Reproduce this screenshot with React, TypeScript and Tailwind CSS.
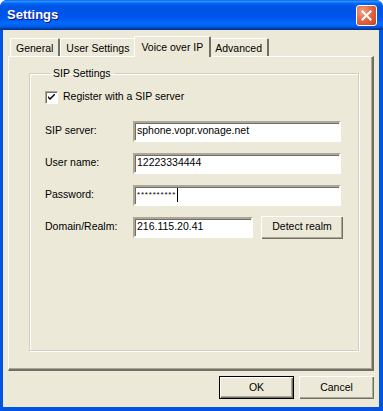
import { useState } from "react";

const font = "font-['Liberation_Sans',Arial,sans-serif]";

function Tab({ label, selected }: { label: string; selected?: boolean }) {
  if (selected) {
    return (
      <div className="relative z-10 -mx-[2px] mb-[-1px] flex h-[21px] items-start border-l border-t border-r-2 border-l-white border-t-white border-r-[#716F64] bg-[#ECE9D8] px-[6px] pt-[3px] rounded-t-[2px]">
        {label}
      </div>
    );
  }
  return (
    <div className="flex h-[18px] items-start border-l border-t border-r-2 border-l-white border-t-white border-r-[#716F64] bg-[#ECE9D8] px-[5px] pt-[2px] rounded-t-[2px]">
      {label}
    </div>
  );
}

function Field({ label, value, children }: { label: string; value?: string; children?: React.ReactNode }) {
  return (
    <div className="flex h-[21px] items-center">
      <div className="w-[88px] shrink-0">{label}</div>
      <div className="flex h-[21px] w-[208px] items-center border-2 border-t-[#ACA899] border-l-[#ACA899] border-b-white border-r-white bg-white shadow-[inset_1px_1px_0_#716F64] pl-[2px]">
        {value}
        {children}
      </div>
    </div>
  );
}

function Btn({ label, def, w = "w-[75px]" }: { label: string; def?: boolean; w?: string }) {
  return (
    <button
      className={`flex h-[23px] ${w} items-center justify-center bg-[#ECE9D8] ${
        def
          ? "border border-black shadow-[inset_1px_1px_0_#fff,inset_-1px_-1px_0_#716F64,inset_-2px_-2px_0_#ACA899]"
          : "shadow-[inset_1px_1px_0_#fff,inset_-1px_-1px_0_#716F64,inset_-2px_-2px_0_#ACA899]"
      }`}
    >
      {label}
    </button>
  );
}

export default function App() {
  const [checked, setChecked] = useState(true);

  return (
    <div className={`${font} flex h-[411px] w-[383px] flex-col rounded-t-[7px] bg-[#0054E3] text-[10.5px] text-black`}>
      {/* title bar */}
      <div className="flex h-[30px] shrink-0 items-center justify-between rounded-t-[7px] bg-[linear-gradient(to_bottom,#0058ee_0%,#3593ff_4%,#288eff_6%,#127dff_8%,#036ffc_10%,#0262ee_14%,#0057e5_20%,#0054e3_24%,#0055eb_56%,#005bf5_66%,#026afe_76%,#0062ef_86%,#0052d6_92%,#0040ab_94%,#003092_100%)] pl-[7px] pr-[6px]">
        <span className="text-[13px] font-bold text-white [text-shadow:1px_1px_#0F1089]">Settings</span>
        <button className="flex h-[21px] w-[21px] items-center justify-center rounded-[3px] border border-white bg-[radial-gradient(circle_at_30%_30%,#F2A287_0%,#E36A46_45%,#C8401E_100%)]">
          <svg width="11" height="11" viewBox="0 0 11 11">
            <path d="M1.5 1.5 L9.5 9.5 M9.5 1.5 L1.5 9.5" stroke="white" strokeWidth="2" strokeLinecap="square" />
          </svg>
        </button>
      </div>

      {/* client */}
      <div className="ml-[3px] mr-[4px] mb-[4px] flex flex-1 flex-col bg-[#ECE9D8] px-[5px] pb-[8px] pt-[6px]">
        <div className="flex items-end pl-[2px]">
          <Tab label="General" />
          <Tab label="User Settings" />
          <Tab label="Voice over IP" selected />
          <Tab label="Advanced" />
        </div>

        <div className="flex h-[315px] flex-col border-l border-t border-l-white border-t-white border-r-2 border-b-2 border-r-[#716F64] border-b-[#716F64] shadow-[inset_-1px_-1px_0_#ACA899] px-[20px] pt-[9px]">
          <fieldset className="h-[285px] border border-[#D0D0BF] shadow-[1px_1px_0_#fff,inset_1px_1px_0_#fff] px-[15px] pt-[9px]">
            <legend className="ml-[5px] px-[3px]">SIP Settings</legend>

            <label className="flex h-[13px] items-center gap-[5px]" onClick={() => setChecked(!checked)}>
              <span className="flex h-[13px] w-[13px] items-center justify-center border border-t-[#ACA899] border-l-[#ACA899] border-b-white border-r-white bg-white shadow-[inset_1px_1px_0_#716F64]">
                {checked && (
                  <svg width="7" height="7" viewBox="0 0 7 7">
                    <path d="M0 2 L0 4 L2 6 L7 1 L7 -1 L2 4 Z" fill="black" />
                  </svg>
                )}
              </span>
              Register with a SIP server
            </label>

            <div className="mt-[17px] flex flex-col gap-[11px]">
              <Field label="SIP server:" value="sphone.vopr.vonage.net" />
              <Field label="User name:" value="12223334444" />
              <Field label="Password:">
                <span className="text-[8px] leading-none tracking-[0.8px]">**********</span>
                <span className="ml-[1px] h-[14px] w-[1px] bg-black" />
              </Field>
              <div className="flex h-[21px] items-center">
                <div className="w-[88px] shrink-0">Domain/Realm:</div>
                <div className="flex h-[21px] w-[120px] items-center border-2 border-t-[#ACA899] border-l-[#ACA899] border-b-white border-r-white bg-white shadow-[inset_1px_1px_0_#716F64] pl-[2px]">
                  216.115.20.41
                </div>
                <div className="ml-[8px]">
                  <Btn label="Detect realm" w="w-[82px]" />
                </div>
              </div>
            </div>
          </fieldset>
        </div>

        <div className="mt-auto flex justify-end gap-[5px]">
          <Btn label="OK" def />
          <Btn label="Cancel" />
        </div>
      </div>
    </div>
  );
}
